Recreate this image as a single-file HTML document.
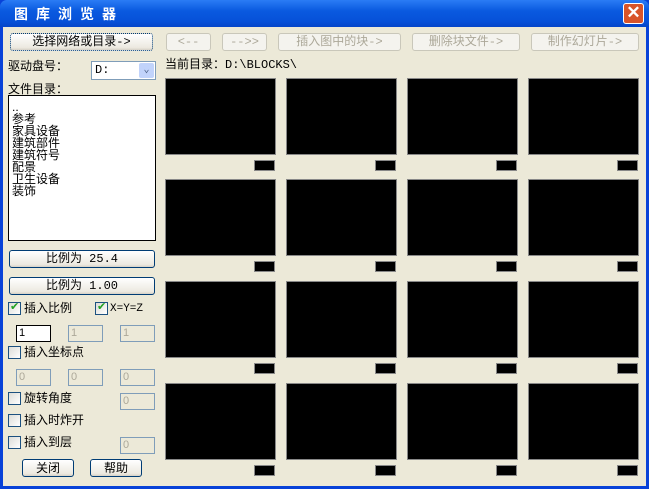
<!DOCTYPE html>
<html><head><meta charset="utf-8"><style>
*{margin:0;padding:0;box-sizing:border-box}
body{width:649px;height:489px;overflow:hidden;background:#0842d8;font-family:"Liberation Sans","Noto Sans CJK SC",sans-serif;font-size:12px;position:relative}
.title{position:absolute;left:0;top:0;width:649px;height:27px;background:linear-gradient(#2a7cf5,#0a5ae0 40%,#0650d8 80%,#0545c8);border-radius:7px 7px 0 0}
.title span{position:absolute;left:14px;top:4px;color:#fff;font-weight:bold;font-size:14px;letter-spacing:8px;font-family:"Noto Sans CJK SC",sans-serif}
.close{position:absolute;left:623px;top:3px;width:21px;height:21px;background:#d8542a;border:1px solid #fff;border-radius:3px;color:#fff;font-weight:bold;font-size:17px;line-height:18px;text-align:center}
.body{position:absolute;left:3px;top:27px;width:643px;height:459px;background:#ece9d8}
.a{position:absolute}
.btn{position:absolute;height:18px;border:1px solid #003c74;border-radius:3px;background:linear-gradient(#fff,#ece9e0 85%,#d6d0c5);text-align:center;line-height:16px;font-size:12px;color:#000;font-family:"Liberation Mono","Noto Sans CJK SC",monospace}
.dis{border-color:#c9c7ba;background:#f4f3ee;color:#aca899}
.blk{position:absolute;width:111px;height:77px;background:#000;border:1px solid #888}
.sm{position:absolute;width:21px;height:11px;background:#000;border:1px solid #888}
.cb{position:absolute;width:13px;height:13px;border:1px solid #1c5180;background:linear-gradient(135deg,#dcdcd7,#fff)}
.cb.on::after{content:"✔";position:absolute;left:1px;top:-3px;color:#21a121;font-size:11px}
.lbl{position:absolute;font-size:12px;line-height:14px}
.ed{position:absolute;width:35px;height:17px;border:1px solid #7f9db9;background:#ece9d8;color:#aca899;font-size:11px;padding-left:2px;line-height:15px}
.list div{height:12px;line-height:12px;font-size:12px;white-space:nowrap}
</style></head><body>
<div class="title"><span>图库浏览器</span><div class="close">✕</div></div>
<div class="body"></div>
<div class="btn" style="left:10px;top:33px;width:143px;border-style:dotted">选择网络或目录-></div>
<div class="btn dis" style="left:166px;top:33px;width:45px">&lt;--</div>
<div class="btn dis" style="left:222px;top:33px;width:45px">-->></div>
<div class="btn dis" style="left:278px;top:33px;width:123px">插入图中的块-></div>
<div class="btn dis" style="left:412px;top:33px;width:108px">删除块文件-></div>
<div class="btn dis" style="left:531px;top:33px;width:108px">制作幻灯片-></div>
<div class="lbl" style="left:8px;top:59px">驱动盘号：</div>
<div class="a" style="left:91px;top:61px;width:65px;height:19px;border:1px solid #7f9db9;background:#fff;font-family:'Liberation Mono',monospace;padding:1px 3px">D:<div style="position:absolute;right:1px;top:1px;width:15px;height:15px;background:#c1d3fb;border-radius:2px;color:#4d6185;font-size:10px;text-align:center;line-height:15px">⌄</div></div>
<div class="lbl" style="left:165px;top:58px;font-family:'Liberation Mono','Noto Sans CJK SC',monospace">当前目录：D:\BLOCKS\</div>
<div class="lbl" style="left:8px;top:82px">文件目录：</div>
<div class="a list" style="left:8px;top:95px;width:148px;height:146px;border:1px solid #000;background:#fff;padding:5px 3px 0">
<div>..</div><div>参考</div><div>家具设备</div><div>建筑部件</div><div>建筑符号</div><div>配景</div><div>卫生设备</div><div>装饰</div></div>
<div class="btn" style="left:9px;top:250px;width:146px">比例为 25.4</div>
<div class="btn" style="left:9px;top:277px;width:146px">比例为 1.00</div>
<div class="cb on" style="left:8px;top:302px"></div><div class="lbl" style="left:24px;top:301px">插入比例</div>
<div class="cb on" style="left:95px;top:302px"></div><div class="lbl" style="left:110px;top:302px;font-family:'Liberation Mono',monospace;font-size:11px">X=Y=Z</div>
<div class="ed" style="left:16px;top:325px;background:#fff;color:#000;border-color:#000">1</div>
<div class="ed" style="left:68px;top:325px">1</div>
<div class="ed" style="left:120px;top:325px">1</div>
<div class="cb" style="left:8px;top:346px"></div><div class="lbl" style="left:24px;top:345px">插入坐标点</div>
<div class="ed" style="left:16px;top:369px">0</div>
<div class="ed" style="left:68px;top:369px">0</div>
<div class="ed" style="left:120px;top:369px">0</div>
<div class="cb" style="left:8px;top:392px"></div><div class="lbl" style="left:24px;top:391px">旋转角度</div>
<div class="ed" style="left:120px;top:393px">0</div>
<div class="cb" style="left:8px;top:414px"></div><div class="lbl" style="left:24px;top:413px">插入时炸开</div>
<div class="cb" style="left:8px;top:436px"></div><div class="lbl" style="left:24px;top:435px">插入到层</div>
<div class="ed" style="left:120px;top:437px">0</div>
<div class="btn" style="left:22px;top:459px;width:52px;font-family:'Noto Sans CJK SC',sans-serif">关闭</div>
<div class="btn" style="left:90px;top:459px;width:52px;font-family:'Noto Sans CJK SC',sans-serif">帮助</div>
<div id="g"></div>
<script>
var h='';var xs=[165,286,407,528],ys=[78,179,281,383];
ys.forEach(function(y){xs.forEach(function(x){h+='<div class="blk" style="left:'+x+'px;top:'+y+'px"></div><div class="sm" style="left:'+(x+89)+'px;top:'+(y+82)+'px"></div>';});});
document.getElementById('g').innerHTML=h;
</script>
</body></html>
